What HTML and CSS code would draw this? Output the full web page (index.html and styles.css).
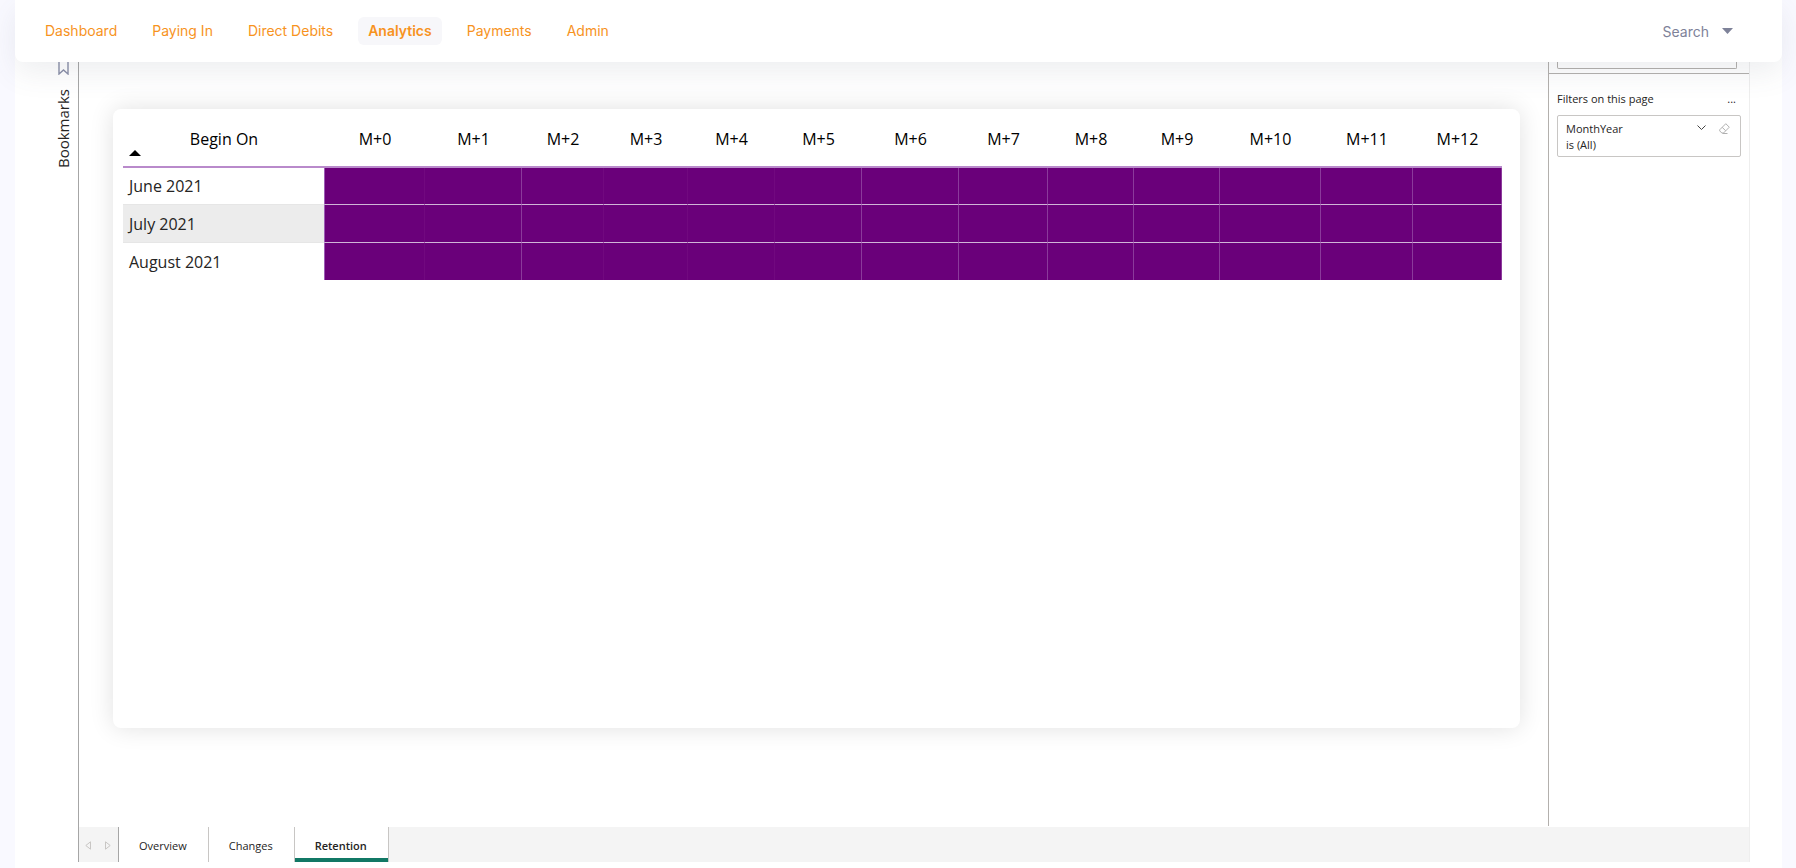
FILE: index.html
```html
<!DOCTYPE html>
<html lang="en">
<head>
<meta charset="utf-8">
<title>Analytics</title>
<link rel="stylesheet" href="styles.css">
</head>
<body>
<div class="page">
  <header class="topbar">
    <nav class="nav">
      <a class="nav-link" href="#">Dashboard</a>
      <a class="nav-link" href="#">Paying In</a>
      <a class="nav-link" href="#">Direct Debits</a>
      <a class="nav-link active" href="#">Analytics</a>
      <a class="nav-link" href="#">Payments</a>
      <a class="nav-link" href="#">Admin</a>
    </nav>
    <button class="search" type="button">Search
      <svg width="11" height="6" viewBox="0 0 11 6"><path d="M0 0h11L5.500 6z" fill="#7e8299"/></svg>
    </button>
  </header>
  <div class="workspace">
    <aside class="bookmarks">
      <svg class="bookmark-icon" width="11" height="13" viewBox="0 0 11 13"><path d="M1 0V12L5.500 8L10 12V0" fill="none" stroke="#8a8fa8" stroke-width="1.400"/></svg>
      <span class="bookmarks-label">Bookmarks</span>
    </aside>
    <div class="report">
      <div class="body">
        <main class="canvas">
          <section class="card">
            <table class="matrix">
              <colgroup>
                <col style="width:202px"><col style="width:100px"><col style="width:97px"><col style="width:82px"><col style="width:84px"><col style="width:87px"><col style="width:87px"><col style="width:97px"><col style="width:89px"><col style="width:86px"><col style="width:86px"><col style="width:101px"><col style="width:92px"><col style="width:89px">
              </colgroup>
              <thead>
                <tr><th class="sorted" scope="col">Begin On<svg class="sort" width="12" height="6" viewBox="0 0 12 6"><path d="M0 6h12L6 0z"/></svg></th><th scope="col">M+0</th><th scope="col">M+1</th><th scope="col">M+2</th><th scope="col">M+3</th><th scope="col">M+4</th><th scope="col">M+5</th><th scope="col">M+6</th><th scope="col">M+7</th><th scope="col">M+8</th><th scope="col">M+9</th><th scope="col">M+10</th><th scope="col">M+11</th><th scope="col">M+12</th></tr>
              </thead>
              <tbody>
                <tr><th scope="row">June 2021</th><td class="faint"></td><td></td><td class="faint"></td><td class="faint"></td><td class="faint"></td><td></td><td></td><td></td><td></td><td></td><td></td><td></td><td></td></tr>
                <tr><th scope="row">July 2021</th><td class="faint"></td><td></td><td class="faint"></td><td class="faint"></td><td class="faint"></td><td></td><td></td><td></td><td></td><td></td><td></td><td></td><td></td></tr>
                <tr><th scope="row">August 2021</th><td class="faint"></td><td></td><td class="faint"></td><td class="faint"></td><td class="faint"></td><td></td><td></td><td></td><td></td><td></td><td></td><td></td><td></td></tr>
              </tbody>
            </table>
          </section>
        </main>
        <aside class="filters">
          <div class="filter-search"><input class="filter-input" type="text" aria-label="Search filters"></div>
          <div class="filter-head"><h2 class="filter-title">Filters on this page</h2><button class="more" type="button" aria-label="More options">...</button></div>
          <div class="filter-card">
            <div class="filter-text"><div>MonthYear</div><div>is (All)</div></div>
            <button class="icon" type="button" aria-label="Expand"><svg width="9" height="6" viewBox="0 0 9 6"><path d="M.5.5l4 4 4-4" fill="none" stroke="#444"/></svg></button>
            <button class="icon" type="button" aria-label="Clear filter"><svg width="11" height="11" viewBox="0 0 11 11"><path d="M6.800.7L10.300 4.200 4.500 10H2.800L.7 7.900V6.800zM3.200 4.300l3.500 3.500M3.500 10.500h5" fill="none" stroke="#b0b0b0"/></svg></button>
          </div>
        </aside>
      </div>
      <footer class="tabs">
        <div class="pager">
          <button class="icon" type="button" aria-label="Previous page"><svg width="6" height="9" viewBox="0 0 6 9"><path d="M5.500.8v7.400L.8 4.500z" fill="none" stroke="#c8c6c4"/></svg></button>
          <button class="icon" type="button" aria-label="Next page"><svg width="6" height="9" viewBox="0 0 6 9"><path d="M.5.8v7.400L5.200 4.500z" fill="none" stroke="#c8c6c4"/></svg></button>
        </div>
        <button class="tab" type="button">Overview</button>
        <button class="tab" type="button">Changes</button>
        <button class="tab current" type="button">Retention</button>
      </footer>
    </div>
  </div>
</div>
</body>
</html>
```
FILE: styles.css
```css
* { box-sizing: border-box; }
body {
  margin: 0;
  background: #f9f9ff;
  color: #252423;
  font-family: "Open Sans", "Noto Sans", sans-serif;
}
button { font: inherit; color: inherit; background: none; border: 0; padding: 0; }
svg { display: block; }
.page {
  display: flex;
  flex-direction: column;
  height: 100vh;
  margin: 0 14px 0 15px;
  background: #fff;
}
.topbar {
  position: relative;
  z-index: 1;
  display: flex;
  justify-content: space-between;
  align-items: center;
  height: 62px;
  flex: none;
  padding: 0 49px 0 20px;
  background: #fff;
  border-radius: 0 0 8px 8px;
  box-shadow: 0 10px 30px rgba(82, 90, 105, 0.1);
  font-family: Inter, sans-serif;
  font-size: 14px;
}
.nav { display: flex; gap: 15px; }
.nav-link {
  padding: 0 10px;
  line-height: 28px;
  color: #f7931e;
  text-decoration: none;
  border-radius: 6px;
}
.nav-link.active { background: #f7f7fa; font-weight: 600; }
.search {
  display: flex;
  align-items: center;
  gap: 13px;
  color: #7e8299;
}
.workspace { display: flex; flex: 1; min-height: 0; padding: 0 32px 6px 0; }
.bookmarks {
  display: flex;
  flex-direction: column;
  align-items: center;
  gap: 14px;
  width: 63px;
  padding-left: 33px;
  flex: none;
}
.bookmarks-label {
  writing-mode: vertical-rl;
  transform: rotate(180deg);
  font-size: 15px;
  line-height: 20px;
  font-weight: 500;
}
.report {
  display: flex;
  flex-direction: column;
  flex: 1;
  min-width: 0;
  border-left: 1px solid #a6a6a6;
  border-right: 1px solid #eee;
}
.body { display: flex; flex: 1; min-height: 0; }
.canvas { flex: 1; min-width: 0; padding: 47px 28px 99px 34px; }
.card {
  height: 100%;
  padding: 10px 19px 10px 10px;
  border-radius: 8px;
  background: #fff;
  box-shadow: 0 0 24px rgba(0, 0, 0, 0.12);
}
.matrix {
  width: 100%;
  table-layout: fixed;
  border-collapse: separate;
  border-spacing: 0;
  font-size: 16px;
}
.matrix th { font-weight: 400; }
.matrix thead th {
  height: 49px;
  padding: 0 0 8px;
  color: #000;
  border-bottom: 2px solid #b98acb;
}
.matrix .sorted { position: relative; }
.sort { position: absolute; left: 6px; bottom: 10px; }
.matrix tbody th {
  height: 37px;
  padding: 0 6px;
  text-align: left;
  border-right: 1px solid #9d5bb5;
}
.matrix tbody td {
  background: #6a007a;
  border-right: 1px solid #8b3a9b;
}
.matrix tbody td.faint { border-right-color: #71097f; }
.matrix tbody tr:nth-child(even) th { height: 38px; background: #ececec; }
.matrix tbody tr:not(:last-child) th { border-bottom: 1px solid #e6e6e6; }
.matrix tbody tr:not(:last-child) td { border-bottom: 1px solid #d0b5d8; }
.filters {
  width: 201px;
  flex: none;
  margin-bottom: 1px;
  border-left: 1px solid #b3b0ad;
  font-size: 11px;
}
.filter-search { padding: 0 12px 4px 8px; border-bottom: 1px solid #b3b0ad; }
.filter-input {
  display: block;
  width: 100%;
  height: 7px;
  padding: 0;
  border: 1px solid #b3b0ad;
  border-top: 0;
  border-radius: 0 0 2px 2px;
  background: #fff;
}
.filter-head {
  display: flex;
  justify-content: space-between;
  align-items: center;
  padding: 15px 13px 7px 8px;
}
.filter-title { margin: 0; font-size: 11px; line-height: 19px; font-weight: 400; }
.filter-card {
  display: flex;
  align-items: flex-start;
  gap: 13px;
  margin: 0 8px;
  padding: 5px 10px 3px 8px;
  border: 1px solid #c8c6c4;
  border-radius: 2px;
}
.filter-text { flex: 1; line-height: 16px; }
.filter-card .icon { display: flex; align-items: center; height: 14px; }
.tabs { display: flex; height: 35px; flex: none; background: #f4f4f4; font-size: 11px; }
.pager {
  display: flex;
  align-items: center;
  justify-content: space-between;
  width: 40px;
  padding: 2px 7px 0 6px;
  border-right: 1px solid #a6a6a6;
}
.tab {
  padding: 2px 21px 0 20px;
  background: #fff;
  border-right: 1px solid #c8c6c4;
}
.tab.current { font-weight: 600; box-shadow: inset 0 -4px #117865; }
```
